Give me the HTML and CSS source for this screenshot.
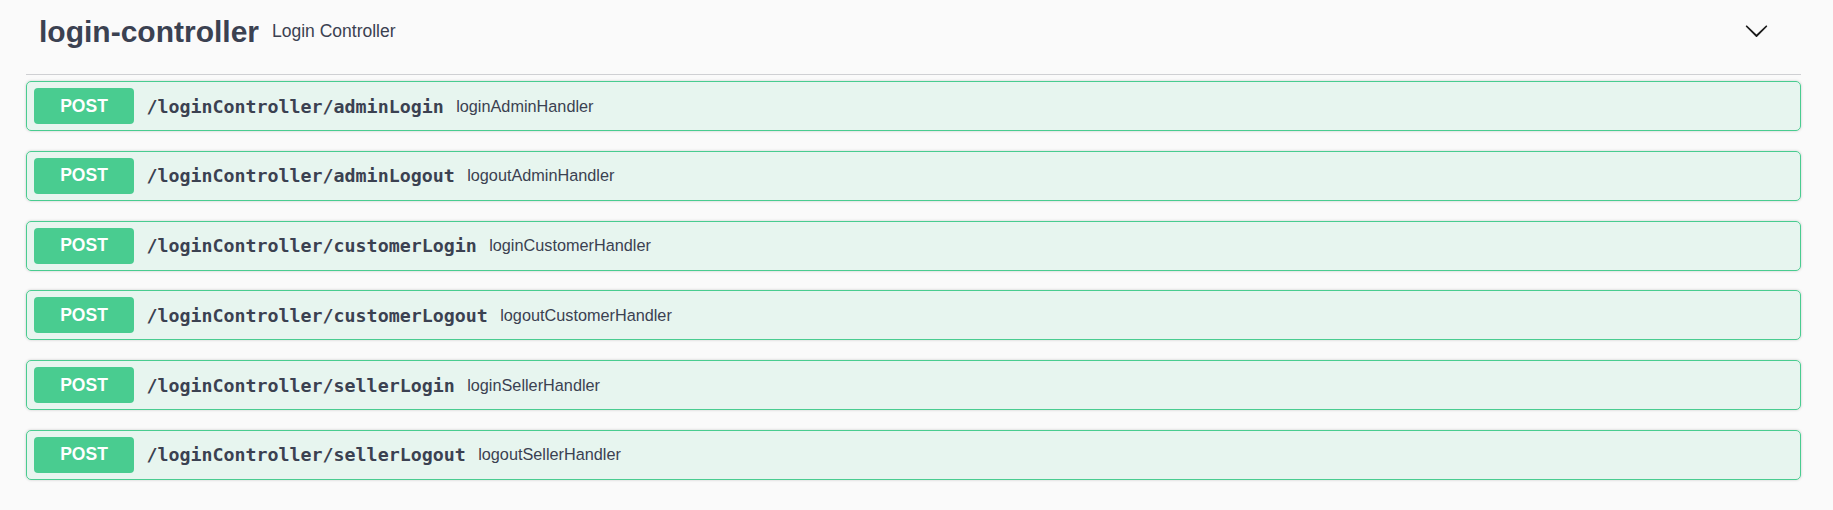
FILE: index.html
```html
<!DOCTYPE html>
<html lang="en">
<head>
<meta charset="utf-8">
<title>login-controller</title>
<link rel="stylesheet" href="styles.css">
</head>
<body>
<section class="tag-section">
  <div class="tag-header">
    <h3 class="tag-title">login-controller</h3>
    <small class="tag-desc">Login Controller</small>
    <button class="expand" aria-label="collapse">
      <svg class="arrow" viewBox="0 0 20 20" width="25" height="25"><path d="M17.418 6.109c.272-.268.709-.268.979 0s.271.701 0 .969l-7.908 7.83c-.27.268-.707.268-.979 0l-7.908-7.83c-.27-.268-.27-.701 0-.969.271-.268.709-.268.979 0L10 13.25l7.418-7.141z"/></svg>
    </button>
  </div>
  <div class="ops">
    <div class="op"><span class="method">POST</span><span class="path">/loginController/adminLogin</span><span class="desc">loginAdminHandler</span></div>
    <div class="op"><span class="method">POST</span><span class="path">/loginController/adminLogout</span><span class="desc">logoutAdminHandler</span></div>
    <div class="op"><span class="method">POST</span><span class="path">/loginController/customerLogin</span><span class="desc">loginCustomerHandler</span></div>
    <div class="op"><span class="method">POST</span><span class="path">/loginController/customerLogout</span><span class="desc">logoutCustomerHandler</span></div>
    <div class="op"><span class="method">POST</span><span class="path">/loginController/sellerLogin</span><span class="desc">loginSellerHandler</span></div>
    <div class="op"><span class="method">POST</span><span class="path">/loginController/sellerLogout</span><span class="desc">logoutSellerHandler</span></div>
  </div>
</section>
</body>
</html>
```

FILE: styles.css
```css
html, body {
  margin: 0;
  padding: 0;
  background: #fafafa;
}

body {
  font-family: "Liberation Sans", Arial, sans-serif;
  color: #3b4151;
}

.tag-section {
  padding: 0 32px 0 26px;
}

.tag-header {
  display: flex;
  align-items: center;
  height: 63px;
  padding: 0 32px 11px 13px;
  border-bottom: 1px solid #cfd0d3;
}

.tag-title {
  margin: 0;
  font-size: 30px;
  font-weight: 700;
  color: #3b4151;
}

.tag-desc {
  flex: 1;
  padding: 0 13px;
  font-size: 17.5px;
  color: #3b4151;
}

.expand {
  border: none;
  background: none;
  padding: 0;
  margin: 0 0 2.5px 0;
  display: flex;
  cursor: pointer;
}

.arrow {
  fill: #1a1a1a;
}

.ops {
  display: flex;
  flex-direction: column;
  padding-top: 6px;
}

.op {
  display: flex;
  align-items: center;
  height: 36px;
  padding: 6px 7px;
  margin-bottom: 19.8px;
  border: 1px solid #49cc90;
  border-radius: 5px;
  background: rgba(73, 204, 144, 0.1);
  box-shadow: 0 0 3px rgba(0, 0, 0, 0.19);
}

.method {
  display: flex;
  align-items: center;
  justify-content: center;
  width: 100px;
  height: 36px;
  border-radius: 4px;
  background: #49cc90;
  color: #fff;
  font-size: 17.5px;
  font-weight: 700;
}

.path {
  padding: 0 12.5px;
  font-family: "DejaVu Sans Mono", "Liberation Mono", monospace;
  font-size: 18.3px;
  font-weight: 700;
  color: #3b4151;
}

.desc {
  font-size: 16.25px;
  color: #3b4151;
}
```
